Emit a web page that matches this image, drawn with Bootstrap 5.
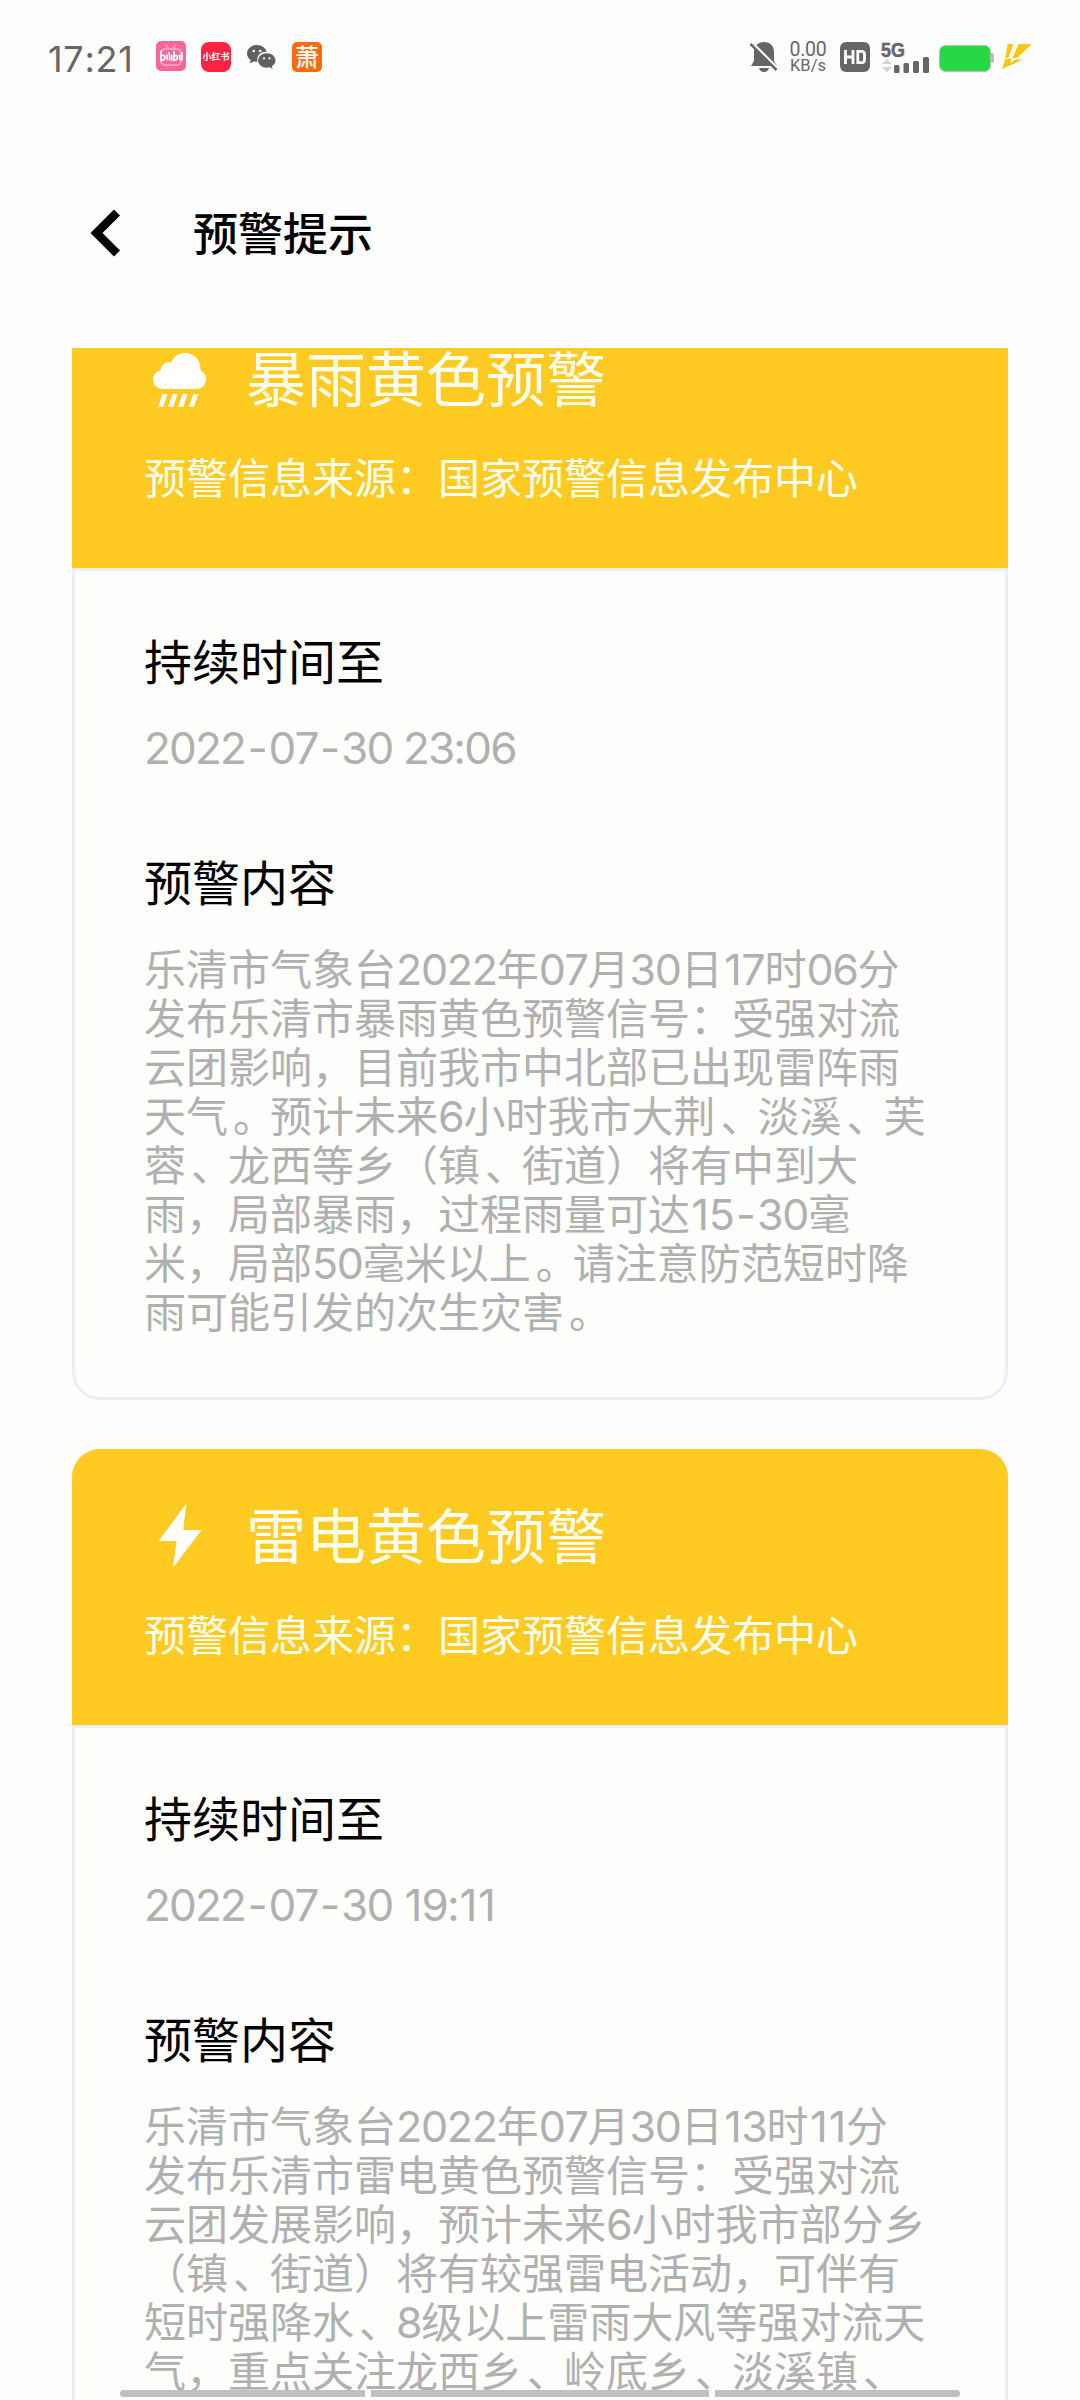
<!DOCTYPE html>
<html lang="zh-CN">
<head>
<meta charset="utf-8">
<meta name="viewport" content="width=device-width, initial-scale=1">
<title>预警提示</title>
<link href="https://cdn.jsdelivr.net/npm/bootstrap@5.3.0/dist/css/bootstrap.min.css" rel="stylesheet">
<style>
  body { font-family: "Noto Sans CJK SC", sans-serif; background: #fefefe; color: #000; }
  .screen { width: 1080px; height: 2400px; }
  .statusbar { height: 114px; padding: 0 48px 0 47px; color: #666; font-family: Inter, "Noto Sans CJK SC", sans-serif; }
  .clock { font-size: 36px; line-height: 36px; width: 109px; letter-spacing: .7px; font-kerning: none; padding-top: 3px; padding-left: 1px; }
  .app-tile { width: 30px; height: 30px; border-radius: 5px; line-height: 30px; }
  .tile-bili { background: #fb6698; margin-right: 15px; margin-top: -2px; }
  .tile-red { background: #ff2442; border-radius: 8px; font-size: 9px; font-weight: 700; font-family: "Noto Sans CJK SC", sans-serif; margin-right: 16px; }
  .tile-xiao { background: #ff6a0c; font-size: 24px; font-weight: 500; line-height: 28px; font-family: "Noto Sans CJK SC", sans-serif; }
  .netrate { font-family: Roboto, sans-serif; width: 42px; margin: 0 11px 0 9px; }
  .rate-num { font-size: 19.5px; line-height: 17px; letter-spacing: -.2px; }
  .rate-unit { font-size: 16.5px; line-height: 15px; }
  .appbar { height: 234px; padding: 4px 0 0 90px; }
  .appbar-title { font-size: 45px; line-height: 60px; font-weight: 500; margin-left: 72px; margin-top: -2px; }
  .scroller { height: 2052px; padding: 0 72px; }
  .alert-card { border: 0; border-radius: 28px; background: #fefefd; margin-bottom: 49px; }
  .alert-card.scrolled { margin-top: -56px; }
  .alert-head { background: #ffca22; color: #fffff2; height: 276px; border-radius: 28px 28px 0 0; padding: 44px 72px 0; }
  .alert-name { font-size: 60px; line-height: 80px; margin-left: 30px; }
  .alert-icon { width: 72px; height: 72px; margin-top: 6px; }
  .alert-source { font-size: 42px; line-height: 60px; margin-top: 30px; }
  .alert-body { border: 3px solid #e9eff6; border-radius: 0 0 28px 28px; padding: 54px 60px 63px 69px; }
  .field-label { font-size: 48px; line-height: 68px; }
  .field-date { font: 400 44px/50px Inter, sans-serif; font-kerning: none; letter-spacing: -1.8px; color: #b0b0b0; margin: 30px 0 73px; }
  .field-text { font-size: 42px; line-height: 49px; color: #b0b0b0; margin-top: 28px; }
  .num { font-family: Inter, sans-serif; font-size: 43px; line-height: 1; letter-spacing: -1.3px; font-kerning: none; }
  .one { padding: 0 1px 0 1.500px; }
  .dash { padding: 0 2.500px; }
  .sep { margin: 0 -5px 0 5px; }
  .gesture-bars { left: 120px; bottom: 3px; width: 840px; height: 7px; gap: 6px; }
  .gesture-bars span { background: #c0c0c0; }
  .g-side { width: 245px; }
  .g-side:first-child { border-radius: 4px 0 0 4px; }
  .g-side:last-child { border-radius: 0 4px 4px 0; }
</style>
</head>
<body>
<div class="screen position-relative overflow-hidden">

  <div class="statusbar d-flex align-items-center justify-content-between">
    <div class="d-flex align-items-center">
      <div class="clock">17:21</div>
      <svg class="app-tile tile-bili" viewBox="0 0 30 30">
        <g fill="none" stroke="#ff9fc0" stroke-width="2"><rect x="5" y="8" width="20" height="16" rx="4"/><path d="M10 4l3 4M20 4l-3 4"/></g>
        <g fill="none" stroke="#fff" stroke-width="1.700"><path d="M5 9.500v10q4-.5 4-3t-3-2M11 13.500l.5 6M13 11l1 8.500M15.500 13.500l.5 6M18 10v9.500q3.500-.5 3.500-3t-3-1.500M23.500 13.500l.5 6M26 11v8.500"/></g>
      </svg>
      <div class="app-tile tile-red text-white text-center text-nowrap overflow-hidden">小红书</div>
      <svg width="29" height="25" viewBox="0 0 29 25" fill="#606060" class="me-3">
        <path d="M10 0C4.500 0 0 3.700 0 8.500c0 2.700 1.500 5 3.700 6.600L2.800 18.500l3.800-2c1.300.4 2.500.5 3.900.5C9 11 13.500 6.700 19.700 6.800 18.600 2.800 14.700 0 10 0z"/>
        <path d="M28.500 15.500c0-4-3.900-7.200-8.700-7.200s-8.700 3.200-8.700 7.200 3.900 7.200 8.700 7.200c1 0 2-.1 2.900-.4l3 1.700-.8-2.800c2.200-1.300 3.600-3.400 3.600-5.700z"/>
        <g fill="#fff"><circle cx="6.700" cy="6" r="1.300"/><circle cx="13.200" cy="6" r="1.300"/><circle cx="17" cy="13.300" r="1.100"/><circle cx="22.600" cy="13.300" r="1.100"/></g>
      </svg>
      <div class="app-tile tile-xiao text-white text-center">萧</div>
    </div>
    <div class="d-flex align-items-center">
      <svg width="28" height="31" viewBox="0 0 28 31">
        <path fill="#666" d="M14 0c6 0 10 4 10 10v9l3 5H1l3-5v-9C4 4 8 0 14 0zM9 26h10q-1 4-5 4t-5-4z"/>
        <path d="M2 .5L28 26.500" stroke="#fefefe" stroke-width="2.500"/><path d="M.5 2L26.500 28" stroke="#666" stroke-width="2.500"/>
      </svg>
      <div class="netrate text-center text-nowrap"><div class="rate-num">0.00</div><div class="rate-unit">KB/s</div></div>
      <svg width="30" height="30" viewBox="0 0 30 30">
        <rect width="30" height="30" rx="6" fill="#666"/>
        <path d="M5.500 8v14M13 8v14M5.500 15H13M17.800 9.300h3.700q3 0 3 3v5.400q0 3-3 3h-3.700z" fill="none" stroke="#fff" stroke-width="2.800"/>
      </svg>
      <svg width="49" height="31" viewBox="0 0 49 31" style="margin-left:11px">
        <text x="0" y="15" font-family="Liberation Sans, sans-serif" font-weight="700" font-size="20" textLength="24" lengthAdjust="spacingAndGlyphs" fill="#666" stroke="#666" stroke-width=".5">5G</text>
        <path d="M1 22l5-5 5 5zM1 25l5 5 5-5z" fill="#d2d2d2"/>
        <g fill="#666"><rect x="13" y="23" width="5.500" height="8" rx="1.500"/><rect x="22.500" y="21" width="5.500" height="10" rx="1.500"/><rect x="32" y="19" width="6" height="12" rx="1.500"/><rect x="42" y="15" width="6" height="16" rx="1.500"/></g>
      </svg>
      <svg width="55" height="30" viewBox="0 0 55 30" style="margin-left:9px">
        <rect x="50" y="11" width="5" height="10" rx="2" fill="#bbb"/><rect x=".5" y="3.500" width="51" height="26" rx="6" fill="#28d745" stroke="#a9c9ae"/>
      </svg>
      <svg width="30" height="26" viewBox="0 0 29 25" style="margin-left:8px">
        <path fill="#fbc70d" d="M5.500 0h5.500L6.500 13 3 14zM16 0h13L15 13l-5 1zM3 15l6-1-1 4 5-3h7L0 24z"/>
      </svg>
    </div>
  </div>

  <div class="appbar d-flex align-items-center">
    <svg width="31" height="50" viewBox="0 0 31 50"><path d="M27 4.500L6.500 25 27 45.500" fill="none" stroke="#000" stroke-width="8.500"/></svg>
    <div class="appbar-title">预警提示</div>
  </div>

  <div class="scroller overflow-hidden">
    <div class="card alert-card scrolled">
      <div class="alert-head">
        <div class="d-flex align-items-center">
          <svg class="alert-icon" viewBox="0 0 72 72" fill="#fff">
            <path d="M18 46a9.500 9.500 0 0 1-1.500-18.800Q18 18 27.500 19.300C30 13 35 10 41 10c9 0 15.500 7 15.500 16.500v1A9.700 9.700 0 0 1 53 46z"/>
            <path d="M18.500 51h5l-4.300 13h-5zM28.500 51h5l-4.300 13h-5zM38.500 51h5l-4.300 13h-5zM49.500 51h5l-4.800 13h-5z"/>
          </svg>
          <div class="alert-name">暴雨黄色预警</div>
        </div>
        <div class="alert-source">预警信息来源：国家预警信息发布中心</div>
      </div>
      <div class="alert-body">
        <div class="field-label">持续时间至</div>
        <div class="field-date">2022<span class="dash">-</span>07<span class="dash">-</span>30 23:06</div>
        <div class="field-label">预警内容</div>
        <div class="field-text text-nowrap">乐清市气象台<span class="num">2022</span>年<span class="num">07</span>月<span class="num">30</span>日<span class="num"><span class="one">1</span>7</span>时<span class="num">06</span>分<br>发布乐清市暴雨黄色预警信号：受强对流<br>云团影响，目前我市中北部已出现雷阵雨<br>天气<span class="sep">。</span>预计未来<span class="num">6</span>小时我市大荆<span class="sep">、</span>淡溪<span class="sep">、</span>芙<br>蓉<span class="sep">、</span>龙西等乡（镇<span class="sep">、</span>街道）将有中到大<br>雨，局部暴雨，过程雨量可达<span class="num"><span class="one">1</span>5<span class="dash">-</span>30</span>毫<br>米，局部<span class="num">50</span>毫米以上<span class="sep">。</span>请注意防范短时降<br>雨可能引发的次生灾害<span class="sep">。</span></div>
      </div>
    </div>

    <div class="card alert-card">
      <div class="alert-head">
        <div class="d-flex align-items-center">
          <svg class="alert-icon" viewBox="0 0 72 72" fill="#fff"><path d="M42.300 3.500L39.200 30h18.400L28.900 67.700 32.700 41h-18z"/></svg>
          <div class="alert-name">雷电黄色预警</div>
        </div>
        <div class="alert-source">预警信息来源：国家预警信息发布中心</div>
      </div>
      <div class="alert-body">
        <div class="field-label">持续时间至</div>
        <div class="field-date">2022<span class="dash">-</span>07<span class="dash">-</span>30 <span class="one">1</span>9:<span class="one">1</span><span class="one">1</span></div>
        <div class="field-label">预警内容</div>
        <div class="field-text text-nowrap">乐清市气象台<span class="num">2022</span>年<span class="num">07</span>月<span class="num">30</span>日<span class="num"><span class="one">1</span>3</span>时<span class="num"><span class="one">1</span><span class="one">1</span></span>分<br>发布乐清市雷电黄色预警信号：受强对流<br>云团发展影响，预计未来<span class="num">6</span>小时我市部分乡<br>（镇<span class="sep">、</span>街道）将有较强雷电活动，可伴有<br>短时强降水<span class="sep">、</span><span class="num">8</span>级以上雷雨大风等强对流天<br>气，重点关注龙西乡<span class="sep">、</span>岭底乡<span class="sep">、</span>淡溪镇<span class="sep">、</span></div>
      </div>
    </div>
  </div>

  <div class="gesture-bars position-absolute d-flex"><span class="g-side"></span><span class="flex-fill"></span><span class="g-side"></span></div>
</div>
<script src="https://cdn.jsdelivr.net/npm/bootstrap@5.3.0/dist/js/bootstrap.bundle.min.js"></script>
</body>
</html>
